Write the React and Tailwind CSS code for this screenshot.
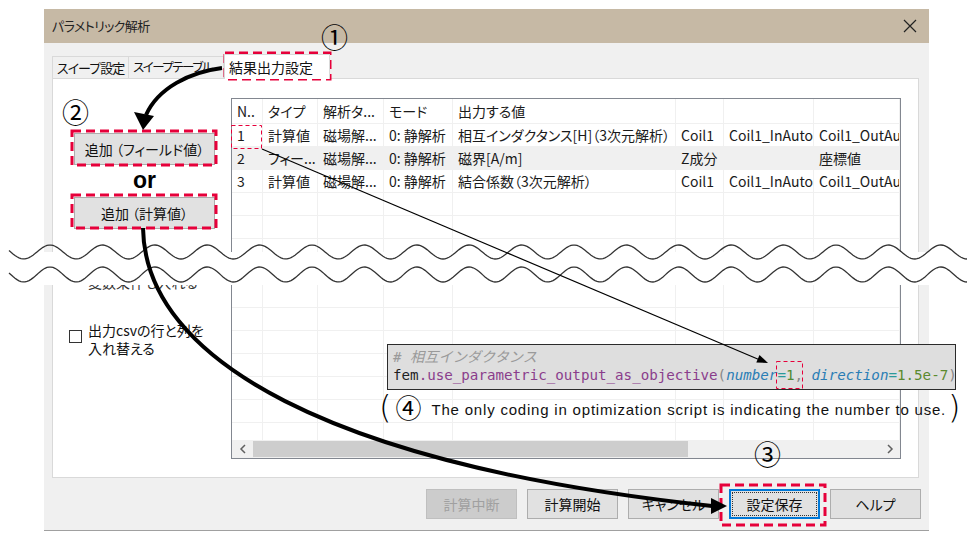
import React from 'react';

const colW = ['w-[31px]', 'w-[55px]', 'w-[66px]', 'w-[69px]', 'w-[223px]', 'w-[48px]', 'w-[90px]', 'w-[86px]'];

const rows = [
  ['N..', 'タイプ', '解析タ...', 'モード', '出力する値', '', '', ''],
  ['1', '計算値', '磁場解...', '0: 静解析', '相互インダクタンス[H]（3次元解析）', 'Coil1', 'Coil1_InAuto', 'Coil1_OutAuto'],
  ['2', 'フィー...', '磁場解...', '0: 静解析', '磁界[A/m]', 'Z成分', '', '座標値'],
  ['3', '計算値', '磁場解...', '0: 静解析', '結合係数（3次元解析）', 'Coil1', 'Coil1_InAuto', 'Coil1_OutAuto'],
];

function wave(cy, amp) {
  let d = '';
  for (let x = 9; x <= 967; x += 2) {
    const y = cy - amp * Math.cos((2 * Math.PI * (x - 50)) / 52.4);
    d += (x === 9 ? 'M' : 'L') + x + ' ' + y.toFixed(2) + ' ';
  }
  return d;
}

function Row({ cells, header, shade }) {
  return (
    <div className={`flex shrink-0 border-b border-[#f0f0f0] ${header ? 'h-[25px]' : 'h-[23px]'} ${shade ? 'bg-[#f0f0f0]' : 'bg-white'}`}>
      {colW.map((w, i) => (
        <div key={i} className={`${w} shrink-0 border-r border-[#f0f0f0] pl-[5px] flex items-center overflow-hidden whitespace-nowrap text-[#1a1a1a]`}>
          {cells ? cells[i] : ''}
        </div>
      ))}
    </div>
  );
}

function Btn({ children, disabled, focused }) {
  if (focused) {
    return (
      <div className="w-[91px] h-[30px] border-2 border-[#0078d7] bg-[#e1e1e1] p-[1px]">
        <div className="w-full h-full border border-dotted border-[#333] flex items-center justify-center text-[#111]">{children}</div>
      </div>
    );
  }
  return (
    <div className={`w-[91px] h-[30px] border flex items-center justify-center ${disabled ? 'bg-[#cccccc] border-[#bfbfbf] text-[#a0a0a0]' : 'bg-[#e1e1e1] border-[#adadad] text-[#111]'}`}>
      {children}
    </div>
  );
}

export default function App() {
  const emptyRows = Array.from({ length: 12 });
  return (
    <div className="relative w-[977px] h-[540px] bg-white overflow-hidden font-['Noto_Sans_CJK_JP',sans-serif] [font-feature-settings:'palt'] text-[14px]">
      {/* dialog */}
      <div className="ml-[44px] mt-[9px] w-[885px] h-[522px] flex flex-col border-b border-[#a0a0a0]">
        <div className="h-[34px] bg-[#c6b9a5] flex items-center justify-between pl-[8px] pr-[12px] shrink-0">
          <span className="text-[13px] tracking-[-0.6px] text-[#222]">パラメトリック解析</span>
          <svg width="14" height="14" viewBox="0 0 14 14"><path d="M1 1L13 13M13 1L1 13" stroke="#222" strokeWidth="1.2" /></svg>
        </div>
        <div className="flex-1 bg-[#f0f0f0] flex flex-col">
          <div className="flex items-end pl-[8px] pt-[10px] h-[35px] whitespace-nowrap">
            <div className="w-[77px] h-[22px] border border-[#d9d9d9] border-b-0 bg-[#f0f0f0] pl-[4px] flex items-center text-[#111] text-[13px] tracking-[-1px] overflow-hidden">スイープ設定</div>
            <div className="w-[95px] h-[22px] border border-[#d9d9d9] border-b-0 border-l-0 bg-[#f0f0f0] pl-[4px] flex items-center text-[#111] text-[12.5px] tracking-[-1.5px] overflow-hidden">スイープテーブル</div>
            <div className="w-[106px] h-[25px] border border-[#d9d9d9] border-b-0 bg-white pl-[4px] flex items-center text-[#111] -mb-px relative z-10 text-[14px]">結果出力設定</div>
          </div>
          <div className="ml-[8px] w-[867px] h-[400px] bg-white border border-[#d9d9d9] flex">
            <div className="w-[178px] shrink-0 pt-[54px] pl-[21px] flex flex-col">
              <div className="w-[141px] h-[32px] bg-[#e1e1e1] border border-[#adadad] flex items-center justify-center text-[#111]">追加 （フィールド値）</div>
              <div className="w-[141px] h-[32px] flex items-center justify-center font-['Liberation_Sans',sans-serif] font-bold text-[23px] text-black pb-[2px]">or</div>
              <div className="w-[141px] h-[32px] bg-[#e1e1e1] border border-[#adadad] flex items-center justify-center text-[#111]">追加 （計算値）</div>
              <div className="mt-[44px] pl-[14px] leading-[18px] text-[#333]">変数条件も入れる</div>
              <div className="mt-[30px] ml-[-5px] flex gap-[6px]">
                <div className="w-[13px] h-[13px] border border-[#333] bg-white mt-[9px] shrink-0" />
                <div className="leading-[18px] text-[#111]">出力csvの行と列を<br />入れ替える</div>
              </div>
            </div>
            <div className="mt-[19px] w-[670px] h-[361px] border border-[#828790] flex flex-col overflow-hidden">
              <div className="flex-1 overflow-hidden flex flex-col">
                <Row cells={rows[0]} header />
                <Row cells={rows[1]} />
                <Row cells={rows[2]} shade />
                <Row cells={rows[3]} />
                {emptyRows.map((_, i) => <Row key={i} />)}
              </div>
              <div className="h-[18px] shrink-0 bg-[#f0f0f0] flex items-center">
                <div className="w-[21px] h-full flex items-center justify-center">
                  <svg width="8" height="10" viewBox="0 0 8 10"><path d="M6 1L2 5L6 9" fill="none" stroke="#606060" strokeWidth="1.5" /></svg>
                </div>
                <div className="w-[435px] h-[16px] bg-[#cdcdcd]" />
                <div className="flex-1" />
                <div className="w-[21px] h-full flex items-center justify-center">
                  <svg width="8" height="10" viewBox="0 0 8 10"><path d="M2 1L6 5L2 9" fill="none" stroke="#606060" strokeWidth="1.5" /></svg>
                </div>
              </div>
            </div>
          </div>
          <div className="flex justify-end gap-[10px] pr-[8px] pt-[11px]">
            <Btn disabled>計算中断</Btn>
            <Btn>計算開始</Btn>
            <Btn>キャンセル</Btn>
            <Btn focused>設定保存</Btn>
            <Btn>ヘルプ</Btn>
          </div>
        </div>
      </div>

      {/* cut band */}
      <svg className="absolute left-0 top-0 pointer-events-none" width="977" height="540">
        <rect x="0" y="252" width="977" height="33" fill="white" />
        <path d={wave(252, 7)} fill="none" stroke="#333" strokeWidth="1.3" />
        <path d={wave(274.5, 7.5)} fill="none" stroke="#333" strokeWidth="1.3" />
      </svg>

      {/* code box */}
      <div className="absolute left-[387px] top-[344px] w-[569px] h-[46px] bg-[#dedede] border-[1.5px] border-[#2b2b2b] pl-[5px] pt-[3px] font-['DejaVu_Sans_Mono','Noto_Sans_CJK_JP',monospace] text-[14.2px] leading-[18px] whitespace-nowrap [font-feature-settings:normal]">
        <div className="italic text-[#9a9a9a]"># 相互インダクタンス</div>
        <div>
          <span className="text-[#1f1f1f]">fem</span>
          <span className="text-[#8a3d8c]">.use_parametric_output_as_objective</span>
          <span className="text-[#888]">(</span>
          <span className="italic text-[#2a7db5]">number</span>
          <span className="text-[#2a9a9a]">=</span>
          <span className="text-[#4e8a36]">1</span>
          <span className="text-[#888]">, </span>
          <span className="italic text-[#2a7db5]">direction</span>
          <span className="text-[#2a9a9a]">=</span>
          <span className="text-[#5b8a2e]">1.5e-7</span>
          <span className="text-[#888]">)</span>
        </div>
      </div>

      {/* note */}
      <div className="absolute left-[379px] top-[387px] flex items-center whitespace-nowrap">
        <span className="font-['DejaVu_Sans',sans-serif] font-extralight text-[32px] leading-[40px] text-black">(</span>
        <span className="text-[26px] leading-[30px] text-black ml-[4px]">④</span>
        <span className="font-['Liberation_Sans',sans-serif] text-[15px] tracking-[0.8px] text-[#111] mt-[6px] ml-[10px]">The only coding in optimization script is indicating the number to use.</span>
        <span className="font-['DejaVu_Sans',sans-serif] font-extralight text-[32px] leading-[40px] text-black ml-[2px]">)</span>
      </div>

      {/* circled numbers */}
      <div className="absolute left-[321px] top-[22px] text-[27px] leading-[30px] text-black">①</div>
      <div className="absolute left-[62px] top-[97px] text-[27px] leading-[30px] text-black">②</div>
      <div className="absolute left-[754px] top-[439px] text-[27px] leading-[30px] text-black">③</div>

      {/* arrows and marks */}
      <svg className="absolute left-0 top-0 pointer-events-none" width="977" height="540">
        <g fill="none" stroke="#e6003a" strokeWidth="3" strokeDasharray="9 5">
          <rect x="225" y="53" width="105" height="26" />
          <rect x="72" y="131" width="144" height="34" />
          <rect x="72" y="195" width="144" height="33" />
          <rect x="721" y="485" width="104" height="40" />
        </g>
        <g fill="none" stroke="#e6003a" strokeWidth="1" strokeDasharray="4 3">
          <rect x="231.5" y="125.5" width="30" height="23" />
          <rect x="776.5" y="361.5" width="26" height="27" />
        </g>
        <path d="M222 68 C190 72, 158 88, 146 115" fill="none" stroke="black" strokeWidth="4" />
        <polygon points="143,130 134,112 154,116" fill="black" />
        <path d="M143 228 C145 360, 330 465, 712 506" fill="none" stroke="black" strokeWidth="4" />
        <polygon points="727,506 711,498 711,514" fill="black" />
        <line x1="262" y1="149" x2="760" y2="360" stroke="black" strokeWidth="1.2" />
        <polygon points="768,363 756.3,362.4 759.5,355" fill="black" />
      </svg>
    </div>
  );
}
